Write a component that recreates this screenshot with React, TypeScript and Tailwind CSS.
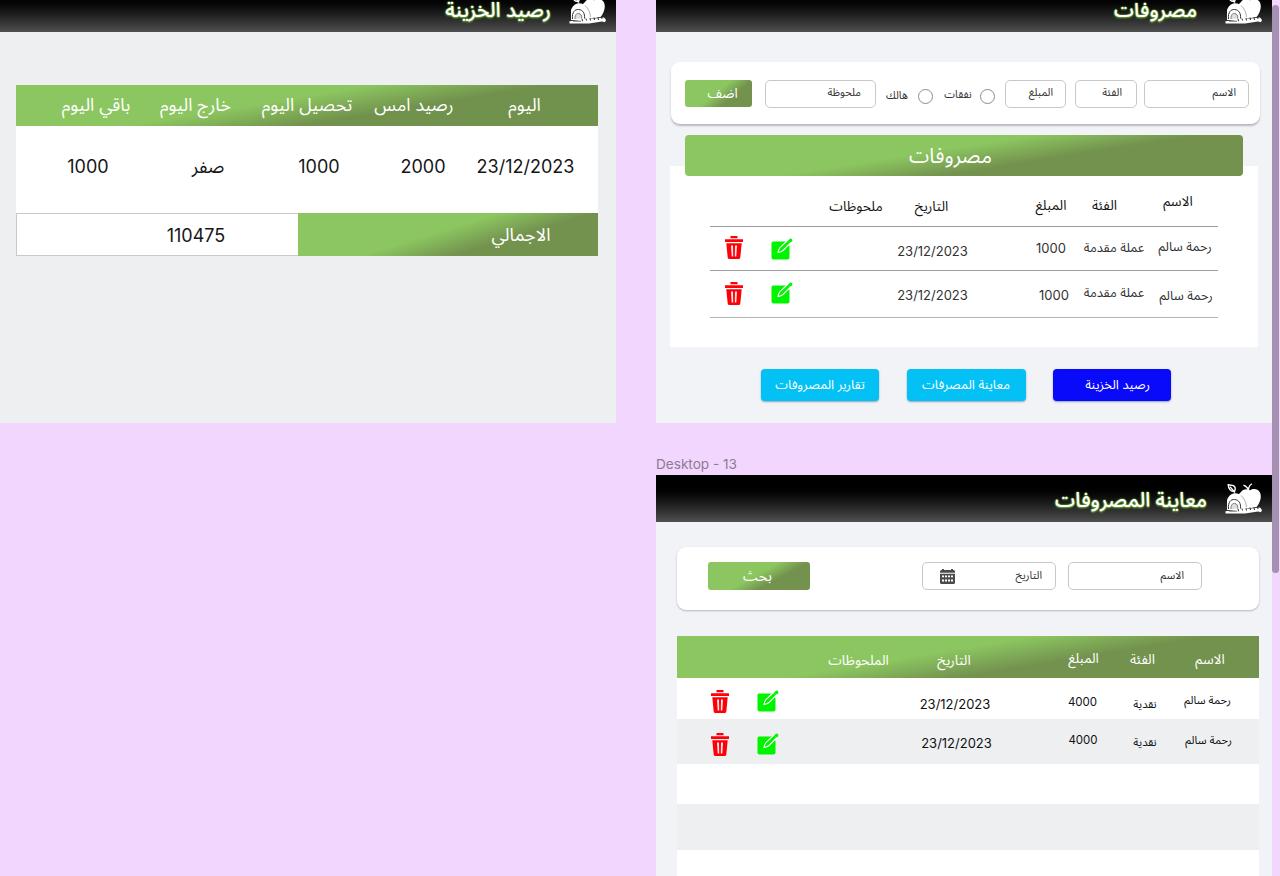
import type { ReactNode } from "react";

const FONT = "font-[Inter,'Noto_Sans_Arabic','DejaVu_Sans',sans-serif]";

function Cell({ className, children }: { className: string; children: ReactNode }) {
  return (
    <div className={`flex shrink-0 justify-center whitespace-nowrap leading-none ${className}`}>
      <span dir="auto">{children}</span>
    </div>
  );
}

function Logo() {
  return (
    <svg viewBox="0 0 38 32" className="h-[32px] w-[38px] shrink-0" fill="none">
      <path
        d="M16 9C18 5.800 22 5.500 25 7.300C28 5.300 33 5.500 35 9.500C37 14 35 20 31.500 24L20 26L12 13Z"
        fill="#fff"
      />
      <path d="M23.500 7C22.500 4.500 21 3 18.500 2.200M23.500 7C23.500 4 25 2 27 .8" stroke="#fff" strokeWidth="1.300" />
      <path d="M3.200 1.800L8.500 2.600C10.300 4 10.600 6.500 9.300 8.600C6 8.600 3.600 6.500 3.200 1.800Z" stroke="#fff" strokeWidth="1.400" />
      <path d="M5 3.800L10 9.500" stroke="#fff" strokeWidth="1.300" />
      <path d="M2 27V17C4 10.500 10 8.500 14.500 11.500C18.500 14.500 21 19 22 27Z" fill="#fff" />
      <path d="M16 12.500C19 15 21 19 21.500 24" stroke="#777" strokeWidth="0.600" />
      <path d="M3.500 26C2.800 19 6 16.300 9.500 16.500C14 16.800 16 20.500 15.500 25.500" stroke="#333" strokeWidth="1" />
      <path d="M6 26C5.800 22 7.500 20.300 9.500 20.400C12 20.600 13 22.800 12.700 25.500" stroke="#777" strokeWidth="1" fill="#ddd" />
      <path d="M.5 28.300L35 24.500L37 27L36 29.300L33 28.500L20 30.500H.5Z" fill="#fff" />
      <path d="M13 25.800L13.500 28.300M17 25.500L17.500 27.500M21 25L21.500 27.500M25 24.500L25.500 27M29 24.200L29.500 27M32.500 23.800L33 26" stroke="#333" strokeWidth="1" />
      <path d="M4 28.300H12" stroke="#555" strokeWidth="0.700" />
    </svg>
  );
}

function TopBar({ title, className, titleClassName }: { title: string; className: string; titleClassName: string }) {
  return (
    <div
      className={`flex h-[47px] shrink-0 items-center justify-end bg-linear-to-b from-black from-15% to-[#505050] pr-[9px] ${className}`}
    >
      <h1
        dir="rtl"
        className={`pt-[3px] leading-none font-medium whitespace-nowrap text-white [text-shadow:0_0_1px_#6aa534,0_0_2px_#76b93c,0_1px_2px_#6aa534] ${titleClassName}`}
      >
        {title}
      </h1>
      <Logo />
    </div>
  );
}

function TrashIcon({ className }: { className: string }) {
  return (
    <svg viewBox="0 0 18 23" className={`h-[23px] w-[18px] shrink-0 ${className}`} fill="#ff0008">
      <path d="M5.500 0H12.500V2.200H5.500ZM0 3.200H18V6H0ZM1.300 7.300H16.700L15.300 21.500Q15 23 13.700 23H4.300Q3 23 2.700 21.500Z" />
      <path d="M6 9.500H8L8.200 20.500H6.700ZM10 9.500H12L11.300 20.500H9.800Z" fill="#fff" fillOpacity="0.900" />
    </svg>
  );
}

function EditIcon({ className }: { className: string }) {
  return (
    <svg viewBox="0 0 22 22" className={`h-[22px] w-[22px] shrink-0 ${className}`}>
      <path d="M2 3.500H15L18.500 8V19.500Q18.500 21.500 16.500 21.500H2.500Q.5 21.500 .5 19.500V5.500Q.5 3.500 2 3.500Z" fill="#00f400" />
      <path d="M17.500 1.500L9 9.500Q7.500 11.500 7 14.500Q10.500 14 12 12.500L20 4.500Z" fill="#00f400" stroke="#fff" strokeWidth="1.100" />
      <path d="M18.200 1.400Q19.500 0 20.800 1Q22 2.200 21 3.400L19.700 4.600L17.100 2.400Z" fill="#00f400" />
    </svg>
  );
}

function CalendarIcon() {
  return (
    <svg viewBox="0 0 15 15" className="h-[15px] w-[15px] shrink-0">
      <path d="M0 2.500Q0 1 1.500 1H2V0H4V1H11V0H13V1H13.500Q15 1 15 2.500V3.800H0ZM0 4.800H15V13.500Q15 15 13.500 15H1.500Q0 15 0 13.500Z" fill="#4b4b4b" />
      <path d="M2 6.500H4V8.300H2ZM5 6.500H7V8.300H5ZM8 6.500H10V8.300H8ZM11 6.500H13V8.300H11ZM2 10.500H4V12.500H2ZM5 10.500H7V12.500H5ZM8 10.500H10V12.500H8ZM11 10.500H13V12.500H11Z" fill="#fff" />
    </svg>
  );
}

function Field({ className, label, icon }: { className: string; label: string; icon?: ReactNode }) {
  return (
    <div className={`flex h-[28px] shrink-0 items-center rounded-[5px] border border-[#c8c8ca] bg-white text-[10.800px] leading-none text-[#333] ${className}`}>
      {icon}
      <span dir="rtl" className="ml-auto whitespace-nowrap">{label}</span>
    </div>
  );
}

function Radio({ className }: { className: string }) {
  return <span className={`h-[15px] w-[15px] shrink-0 rounded-full border border-[#8d8d8d] bg-white ${className}`} />;
}

function TreasuryBalance() {
  return (
    <section className="h-[423px] w-[616px] shrink-0 overflow-hidden bg-[#edeff1]">
      <TopBar title="رصيد الخزينة" className="-mt-[15px]" titleClassName="mr-[18px] text-[20.400px]" />
      <div className="mt-[53px] ml-[16px] w-[582px] bg-white">
        <div className="flex h-[41px] items-center bg-[linear-gradient(170.500deg,#8cc660_43%,#71924d_64%)] pb-[1px] text-[17.800px] text-white">
          <Cell className="ml-[45px] w-[70px]">باقي اليوم</Cell>
          <Cell className="ml-[29px] w-[71px]">خارج اليوم</Cell>
          <Cell className="ml-[30px] w-[92px]">تحصيل اليوم</Cell>
          <Cell className="ml-[21px] w-[80px]">رصيد امس</Cell>
          <Cell className="ml-[54px] w-[33px]">اليوم</Cell>
        </div>
        <div className="flex h-[87px] items-center pb-[6px] text-[18px] text-[#161616]">
          <Cell className="ml-[51px] w-[42px]">1000</Cell>
          <Cell className="ml-[82px] w-[34px]">صفر</Cell>
          <Cell className="ml-[73px] w-[42px]">1000</Cell>
          <Cell className="ml-[61px] w-[44px]">2000</Cell>
          <Cell className="ml-[31px] w-[99px]">23/12/2023</Cell>
        </div>
        <div className="flex h-[43px]">
          <div className="flex w-[282px] items-center border border-r-0 border-[#c9c9cb] pt-[2px] text-[18px] text-[#161616]">
            <Cell className="ml-[149px] w-[60px]">110475</Cell>
          </div>
          <div className="flex w-[300px] items-center bg-[linear-gradient(163deg,#8cc660_46%,#73924e_67%)] pt-[1px] text-[18px] text-white">
            <Cell className="ml-[193px] w-[60px]">الاجمالي</Cell>
          </div>
        </div>
      </div>
    </section>
  );
}

function Expenses() {
  return (
    <section className="h-[423px] w-[616px] shrink-0 overflow-hidden bg-[#f2f3f7]">
      <TopBar title="مصروفات" className="-mt-[15px]" titleClassName="mr-[28px] text-[20px]" />
      <div className="mt-[30px] ml-[15px] flex h-[62px] w-[589px] items-start rounded-[9px] bg-white pt-[18px] text-[#333] shadow-[0_2px_2px_#b9bac0]">
        <div className="ml-[14px] flex h-[27px] w-[67px] shrink-0 items-center rounded-[3px] bg-[linear-gradient(140deg,#8cc660_47%,#73924e_68%)] text-[13.500px] text-white">
          <Cell className="ml-[22px] w-[31px]">اضف</Cell>
        </div>
        <Field className="ml-[13px] w-[111px] pr-[14px] pb-[1px]" label="ملحوظة" />
        <Cell className="mt-[11px] ml-[10px] w-[22px] text-[10.800px]">هالك</Cell>
        <Radio className="mt-[9px] ml-[10px]" />
        <Cell className="mt-[10px] ml-[11px] w-[28px] text-[10.800px]">نفقات</Cell>
        <Radio className="mt-[9px] ml-[8px]" />
        <Field className="ml-[10px] w-[61px] pr-[12px] pb-[1px]" label="المبلغ" />
        <Field className="ml-[9px] w-[62px] pr-[14px] pb-[1px]" label="الفئة" />
        <Field className="ml-[7px] w-[105px] pr-[12px] pb-[1px]" label="الاسم" />
      </div>
      <div className="relative z-10 mt-[11px] -mb-[10px] ml-[29px] flex h-[41px] w-[558px] items-center rounded-[4px] bg-[linear-gradient(171deg,#8cc660_43%,#73924e_63%)] pt-[2px] text-[20.500px] text-white">
        <Cell className="ml-[224px] w-[83px]">مصروفات</Cell>
      </div>
      <div className="ml-[14px] h-[181px] w-[588px] bg-white pl-[40px]">
        <div className="flex h-[61px] w-[508px] items-start border-b border-[#9c9c9c] text-[13.700px] text-[#151515]">
          <Cell className="mt-[34px] ml-[119px] w-[54px]">ملحوظات</Cell>
          <Cell className="mt-[34px] ml-[31px] w-[35px]">التاريخ</Cell>
          <Cell className="mt-[33px] ml-[86px] w-[32px]">المبلغ</Cell>
          <Cell className="mt-[33px] ml-[25px] w-[25px]">الفئة</Cell>
          <Cell className="mt-[29px] ml-[46px] w-[30px]">الاسم</Cell>
        </div>
        <div className="flex h-[44px] w-[508px] items-start border-b border-[#9c9c9c] text-[12.800px] text-[#333]">
          <TrashIcon className="mt-[9px] ml-[15px]" />
          <EditIcon className="mt-[11px] ml-[28px]" />
          <Cell className="mt-[18px] ml-[104px] w-[71px] text-[13px]">23/12/2023</Cell>
          <Cell className="mt-[15px] ml-[68px] w-[30px] text-[13px]">1000</Cell>
          <Cell className="mt-[15px] ml-[18px] w-[60px]">عملة مقدمة</Cell>
          <Cell className="mt-[14px] ml-[14px] w-[54px]">رحمة سالم</Cell>
        </div>
        <div className="flex h-[47px] w-[508px] items-start border-b border-[#b4b4b4] text-[12.800px] text-[#333]">
          <TrashIcon className="mt-[11px] ml-[15px]" />
          <EditIcon className="mt-[11px] ml-[28px]" />
          <Cell className="mt-[18px] ml-[104px] w-[71px] text-[13px]">23/12/2023</Cell>
          <Cell className="mt-[18px] ml-[71px] w-[30px] text-[13px]">1000</Cell>
          <Cell className="mt-[16px] ml-[15px] w-[60px]">عملة مقدمة</Cell>
          <Cell className="mt-[19px] ml-[15px] w-[54px]">رحمة سالم</Cell>
        </div>
      </div>
      <div className="mt-[22px] ml-[105px] flex text-[12.800px] text-white">
        <div className="flex h-[32px] w-[118px] items-center rounded-[4px] bg-[#03c1f5] shadow-[0_1px_2px_#8fa3b5]">
          <Cell className="ml-[14px] w-[90px]">تقارير المصروفات</Cell>
        </div>
        <div className="ml-[28px] flex h-[32px] w-[119px] items-center rounded-[4px] bg-[#03c1f5] shadow-[0_1px_2px_#8fa3b5]">
          <Cell className="ml-[15px] w-[88px]">معاينة المصرفات</Cell>
        </div>
        <div className="ml-[27px] flex h-[32px] w-[118px] items-center rounded-[4px] bg-[#0a0afa] shadow-[0_1px_2px_#8fa3b5]">
          <Cell className="ml-[32px] w-[65px]">رصيد الخزينة</Cell>
        </div>
      </div>
    </section>
  );
}

function ExpensesReview() {
  return (
    <section className="h-[401px] w-[616px] shrink-0 overflow-hidden bg-[#f2f3f7]">
      <TopBar title="معاينة المصروفات" className="" titleClassName="mr-[18px] text-[20.200px]" />
      <div className="mt-[25px] ml-[21px] flex h-[63px] w-[582px] items-start rounded-[9px] bg-white pt-[15px] shadow-[0_1px_2px_#b4b5bb]">
        <div className="ml-[31px] flex h-[28px] w-[102px] items-center rounded-[3px] bg-[linear-gradient(151deg,#8cc660_47%,#73924e_66%)] text-[14.500px] text-white">
          <Cell className="ml-[34px] w-[31px]">بحث</Cell>
        </div>
        <Field className="ml-[112px] w-[134px] pr-[13px] pl-[17px]" label="التاريخ" icon={<CalendarIcon />} />
        <Field className="ml-[12px] w-[134px] pr-[17px]" label="الاسم" />
      </div>
      <div className="mt-[26px] ml-[21px] w-[582px]">
        <div className="flex h-[42px] items-start bg-[linear-gradient(170.500deg,#8cc660_43%,#73924e_64%)] text-[13.600px] text-white">
          <Cell className="mt-[18px] ml-[151px] w-[61px]">الملحوظات</Cell>
          <Cell className="mt-[18px] ml-[48px] w-[34px]">التاريخ</Cell>
          <Cell className="mt-[16px] ml-[97px] w-[31px]">المبلغ</Cell>
          <Cell className="mt-[17px] ml-[31px] w-[25px]">الفئة</Cell>
          <Cell className="mt-[17px] ml-[40px] w-[30px]">الاسم</Cell>
        </div>
        <div className="flex h-[41px] items-start bg-white text-[11.200px] text-[#111]">
          <TrashIcon className="mt-[12px] ml-[34px]" />
          <EditIcon className="mt-[12px] ml-[28px]" />
          <Cell className="mt-[20px] ml-[141px] w-[70px] text-[13px]">23/12/2023</Cell>
          <Cell className="mt-[19px] ml-[79px] w-[27px] text-[11.500px]">4000</Cell>
          <Cell className="mt-[21px] ml-[37px] w-[24px]">نقدية</Cell>
          <Cell className="mt-[17px] ml-[27px] w-[47px]">رحمة سالم</Cell>
        </div>
        <div className="flex h-[45px] items-start bg-[#edeff1] text-[11.200px] text-[#111]">
          <TrashIcon className="mt-[14px] ml-[34px]" />
          <EditIcon className="mt-[14px] ml-[28px]" />
          <Cell className="mt-[18px] ml-[142px] w-[71px] text-[13px]">23/12/2023</Cell>
          <Cell className="mt-[16px] ml-[77px] w-[28px] text-[11.500px]">4000</Cell>
          <Cell className="mt-[18px] ml-[36px] w-[24px]">نقدية</Cell>
          <Cell className="mt-[16px] ml-[28px] w-[47px]">رحمة سالم</Cell>
        </div>
        <div className="h-[40px] bg-white" />
        <div className="h-[46px] bg-[#edeff1]" />
        <div className="h-[40px] bg-white" />
      </div>
    </section>
  );
}

export default function App() {
  return (
    <main dir="ltr" className={`flex h-[876px] w-[1280px] items-start overflow-hidden bg-[#f3d6fe] ${FONT}`}>
      <TreasuryBalance />
      <div className="ml-[40px] flex w-[616px] shrink-0 flex-col">
        <Expenses />
        <div className="flex h-[52px] items-end pb-[2px] text-[13.600px] text-[#8b7c92]">
          <span className="leading-[17px]">Desktop - 13</span>
        </div>
        <ExpensesReview />
      </div>
      <div className="mt-[5px] h-[568px] w-[7px] rounded-full bg-[#a591b1]" />
    </main>
  );
}
